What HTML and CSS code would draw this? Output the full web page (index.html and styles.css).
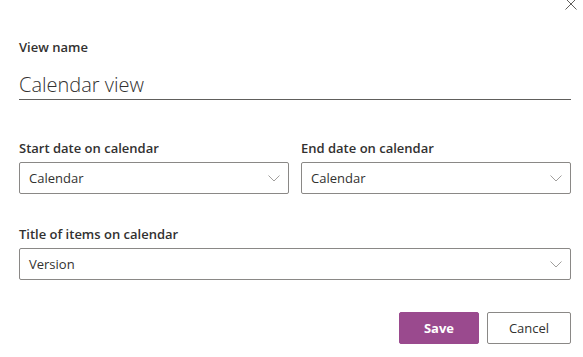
FILE: index.html
```html
<!DOCTYPE html>
<html lang="en">
<head>
  <meta charset="UTF-8" />
  <title>Calendar view</title>
  <link rel="stylesheet" href="styles.css">
</head>
<body>

<div class="dialog">
  <div class="dialog-top">
    <button class="btn-fechar" title="Close">
      <svg width="12" height="12" viewBox="0 0 12 12"><path d="M0.5 0.5 L11.5 11.5 M11.5 0.5 L0.5 11.5" stroke="#605e5c" stroke-width="1" fill="none"/></svg>
    </button>
  </div>

  <div class="campo campo-nome">
    <label class="rotulo" for="nome">View name</label>
    <input class="input-nome" id="nome" type="text" value="Calendar view" />
  </div>

  <div class="linha">
    <div class="campo">
      <div class="rotulo">Start date on calendar</div>
      <div class="dropdown">
        <span>Calendar</span>
        <svg width="12" height="7" viewBox="0 0 12 7"><path d="M0.5 0.5 L6 6 L11.5 0.5" stroke="#a19f9d" stroke-width="1" fill="none"/></svg>
      </div>
    </div>
    <div class="campo">
      <div class="rotulo">End date on calendar</div>
      <div class="dropdown">
        <span>Calendar</span>
        <svg width="12" height="7" viewBox="0 0 12 7"><path d="M0.5 0.5 L6 6 L11.5 0.5" stroke="#a19f9d" stroke-width="1" fill="none"/></svg>
      </div>
    </div>
  </div>

  <div class="campo campo-titulo">
    <div class="rotulo">Title of items on calendar</div>
    <div class="dropdown">
      <span>Version</span>
      <svg width="12" height="7" viewBox="0 0 12 7"><path d="M0.5 0.5 L6 6 L11.5 0.5" stroke="#a19f9d" stroke-width="1" fill="none"/></svg>
    </div>
  </div>

  <div class="acoes">
    <button class="btn-salvar">Save</button>
    <button class="btn-cancelar">Cancel</button>
  </div>
</div>

</body>
</html>
```

FILE: styles.css
```css
* { box-sizing: border-box; margin: 0; padding: 0; }
body {
  font-family: 'Segoe UI', 'Open Sans', sans-serif;
  background: #ffffff;
  color: #323130;
}
.dialog {
  padding: 0 12px 0 19px;
}
.dialog-top {
  display: flex;
  justify-content: flex-end;
  height: 10px;
}
.btn-fechar {
  background: none;
  border: none;
  margin: -2px -6px 0 0;
  width: 12px;
  height: 12px;
  display: flex;
  cursor: pointer;
}
.campo {
  display: flex;
  flex-direction: column;
}
.campo-nome {
  margin-top: 27px;
}
.rotulo {
  font-size: 13px;
  font-weight: 600;
  line-height: 20px;
  color: #323130;
}
.input-nome {
  margin-top: 13px;
  height: 30px;
  border: none;
  border-bottom: 1px solid #605e5c;
  font-family: inherit;
  font-size: 20px;
  font-weight: 300;
  color: #323130;
  outline: none;
  padding: 0 0 1px 0;
}
.linha {
  display: grid;
  grid-template-columns: 1fr 1fr;
  gap: 12px;
  margin-top: 38px;
}
.dropdown {
  margin-top: 4px;
  height: 32px;
  border: 1px solid #8a8886;
  border-radius: 2px;
  display: flex;
  align-items: center;
  justify-content: space-between;
  padding: 0 8px 0 9px;
  font-size: 13px;
  color: #323130;
}
.campo-titulo {
  margin-top: 30px;
}
.acoes {
  margin-top: 32px;
  display: flex;
  justify-content: flex-end;
  gap: 8px;
}
.btn-salvar, .btn-cancelar {
  height: 32px;
  border-radius: 2px;
  font-family: inherit;
  font-size: 13px;
  cursor: pointer;
}
.btn-salvar {
  width: 80px;
  background: #9a4a8e;
  border: 1px solid #9a4a8e;
  color: #ffffff;
  font-weight: 700;
}
.btn-cancelar {
  width: 84px;
  background: #ffffff;
  border: 1px solid #8a8886;
  color: #323130;
  font-weight: 400;
}
```
